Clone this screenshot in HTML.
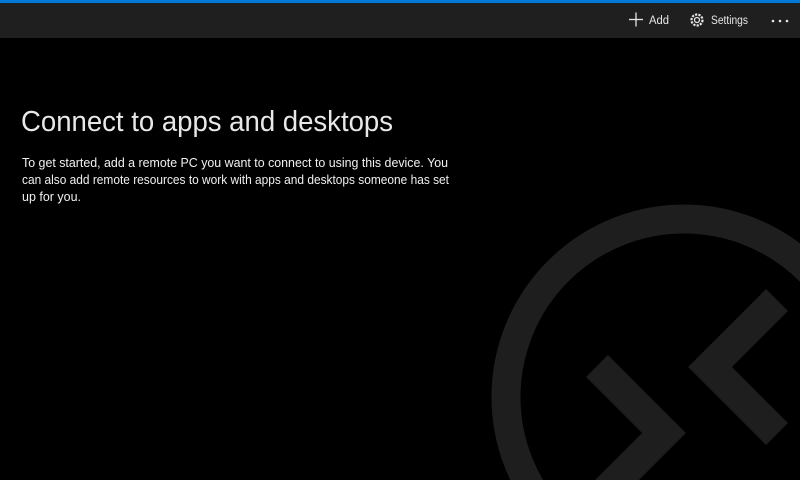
<!DOCTYPE html>
<html><head><meta charset="utf-8"><style>
html,body{margin:0;padding:0;background:#000;width:800px;height:480px;overflow:hidden;font-family:"Liberation Sans",sans-serif;}
.top{position:absolute;left:0;top:0;width:800px;height:3px;background:#0078d7;}
.bar{position:absolute;left:0;top:3px;width:800px;height:35px;background:#1f1f1f;}
svg{position:absolute;left:0;top:0;overflow:hidden;display:block;}
</style></head><body>
<div class="bar"></div><div class="top"></div>
<svg width="800" height="480" viewBox="0 0 800 480">
  <g stroke="#1e1e1e" fill="none">
    <circle cx="684" cy="397" r="178" stroke-width="29"/>
    <polyline points="597,366 664,433 597,500" stroke-width="31" stroke-linejoin="miter" stroke-linecap="butt"/>
    <polyline points="777,300 710,367 777,434" stroke-width="31" stroke-linejoin="miter" stroke-linecap="butt"/>
  </g>
  <g stroke="#e6e6e6" stroke-width="1.3" fill="none">
    <line x1="629" y1="19.5" x2="643" y2="19.5"/><line x1="636" y1="12.5" x2="636" y2="26.5"/>
    <circle cx="697" cy="20" r="2.5"/>
    <circle cx="697" cy="20" r="5.5" stroke-dasharray="2.2 1.2" stroke-width="2.2"/>
  </g>
  <g fill="#e6e6e6" font-family="Liberation Sans, sans-serif" font-size="11.5">
    <text x="649" y="24" textLength="20" lengthAdjust="spacingAndGlyphs">Add</text>
    <text x="711" y="24" textLength="37" lengthAdjust="spacingAndGlyphs">Settings</text>
    <circle cx="773" cy="21" r="1.3"/><circle cx="780" cy="21" r="1.3"/><circle cx="787" cy="21" r="1.3"/>
  </g>
  <text x="21" y="131" fill="#e8e8e8" font-size="29" font-weight="300" textLength="372" lengthAdjust="spacingAndGlyphs">Connect to apps and desktops</text>
  <g fill="#f0f0f0" font-size="12.5">
    <text x="22" y="167" textLength="426" lengthAdjust="spacingAndGlyphs">To get started, add a remote PC you want to connect to using this device. You</text>
    <text x="22" y="184" textLength="427" lengthAdjust="spacingAndGlyphs">can also add remote resources to work with apps and desktops someone has set</text>
    <text x="22" y="201" textLength="59" lengthAdjust="spacingAndGlyphs">up for you.</text>
  </g>
</svg>
</body></html>
